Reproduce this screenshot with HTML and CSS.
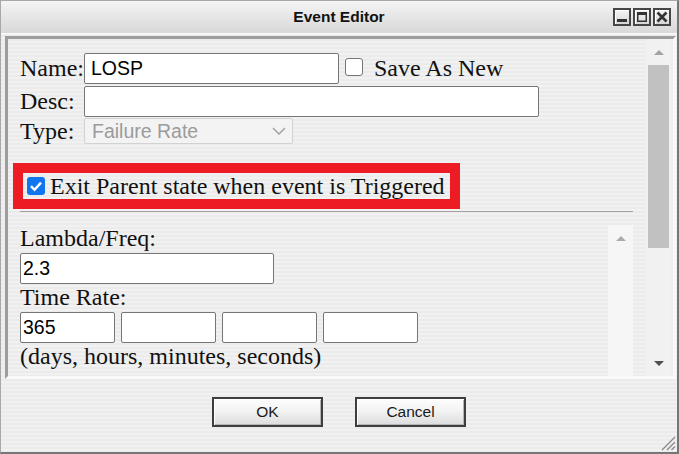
FILE: index.html
```html
<!DOCTYPE html>
<html>
<head>
<meta charset="utf-8">
<link rel="stylesheet" href="styles.css">
</head>
<body>
<div class="window">
  <div class="titlebar">
    <div></div>
    <div class="title">Event Editor</div>
    <div class="tbtns">
      <span class="tbtn"><svg width="14" height="14" viewBox="0 0 14 14"><rect x="2" y="9" width="10" height="3" fill="#333"/></svg></span>
      <span class="tbtn"><svg width="14" height="14" viewBox="0 0 14 14"><rect x="2.75" y="2.75" width="8.5" height="8.5" fill="none" stroke="#333" stroke-width="1.5"/><rect x="2" y="2" width="10" height="3" fill="#333"/></svg></span>
      <span class="tbtn"><svg width="14" height="14" viewBox="0 0 14 14"><path d="M2.5 2.5 L11.5 11.5 M11.5 2.5 L2.5 11.5" stroke="#333" stroke-width="2.6"/></svg></span>
    </div>
  </div>

  <div class="panel">
    <div class="content">
      <div class="row row-name">
        <span class="lbl">Name:</span>
        <input class="txt name" value="LOSP">
        <span class="cb cb-save"></span>
        <span class="cblbl">Save As New</span>
      </div>
      <div class="row row-desc">
        <span class="lbl">Desc:</span>
        <input class="txt desc" value="">
      </div>
      <div class="row row-type">
        <span class="lbl">Type:</span>
        <div class="select"><span>Failure Rate</span><svg width="14" height="8" viewBox="0 0 14 8"><path d="M1 1 L7 7 L13 1" fill="none" stroke="#a2a2a2" stroke-width="1.5"/></svg></div>
      </div>
      <div class="highlight">
        <span class="cb checked"><svg width="18" height="18" viewBox="0 0 18 18"><path d="M4 9.2 L7.5 12.8 L14 5.6" fill="none" stroke="#fff" stroke-width="2.4"/></svg></span>
        <span class="hl-text">Exit Parent state when event is Triggered</span>
      </div>
      <div class="rule"></div>
      <div class="inner">
        <div class="inner-body">
          <div class="field-lbl">Lambda/Freq:</div>
          <input class="txt lambda" value="2.3">
          <div class="field-lbl">Time Rate:</div>
          <div class="times">
            <input class="txt t" value="365">
            <input class="txt t" value="">
            <input class="txt t" value="">
            <input class="txt t" value="">
          </div>
          <div class="field-lbl">(days, hours, minutes, seconds)</div>
        </div>
        <div class="iscroll">
          <div class="arrbox"><span class="tri-up light"></span></div>
        </div>
      </div>
    </div>
    <div class="oscroll">
      <div class="arrbox"><span class="tri-up"></span></div>
      <div class="thumb"></div>
      <div class="spacer"></div>
      <div class="arrbox"><span class="tri-down"></span></div>
    </div>
  </div>

  <div class="footer">
    <button class="btn">OK</button>
    <button class="btn">Cancel</button>
    <svg class="grip" width="18" height="18" viewBox="0 0 18 18"><path d="M17 4 L4 17 M17 9 L9 17 M17 13.5 L13.5 17" stroke="#8a8a8a" stroke-width="1.3"/></svg>
  </div>
</div>
</body>
</html>
```

FILE: styles.css
```css
* { box-sizing: border-box; }

body {
  margin: 0;
  width: 679px;
  height: 454px;
  overflow: hidden;
  background: #f0f0f0;
}

.window {
  width: 679px;
  height: 454px;
  display: flex;
  flex-direction: column;
  border-style: solid;
  border-width: 1px 2px 2px 1px;
  border-color: #a8a8a8 #767676 #767676 #a8a8a8;
  background: repeating-linear-gradient(180deg, #f1f1f1 0, #f1f1f1 2px, #ebebeb 2px, #ebebeb 4px);
  font-family: "Liberation Serif", "Times New Roman", serif;
  color: #111;
}

.titlebar {
  height: 33px;
  flex: none;
  display: grid;
  grid-template-columns: 1fr auto 1fr;
  align-items: center;
  background: linear-gradient(180deg, #f4f4f4 0%, #e6e6e6 50%, #d8d8d8 100%);
  border-bottom: 1px solid #fafafa;
}

.title {
  font: bold 15.5px "Liberation Sans", Arial, sans-serif;
  color: #111;
}

.tbtns {
  justify-self: end;
  display: flex;
  gap: 2px;
  padding-right: 6px;
}

.tbtn {
  width: 18px;
  height: 18px;
  border: 2px solid #464646;
  background: linear-gradient(180deg, #f5f5f5, #d6d6d6);
  box-shadow: inset 1px 1px 0 #ffffff;
  display: flex;
}

.panel {
  flex: none;
  margin: 2px 1px 0 4px;
  height: 343px;
  border-style: solid;
  border-width: 3px;
  border-color: #9d9d9d #f9f9f9 #f9f9f9 #9d9d9d;
  display: flex;
  overflow: hidden;
}

.content {
  flex: 1;
  min-width: 0;
  padding: 14px 13px 0 12px;
}

.row {
  display: flex;
  align-items: center;
}

.row-name { height: 31px; margin-bottom: 2px; }
.row-desc { height: 31px; margin-bottom: 1px; }
.row-type { height: 26px; }

.lbl {
  width: 64px;
  flex: none;
  font-size: 24px;
  line-height: 1.1;
  white-space: nowrap;
}

.txt {
  display: block;
  height: 31px;
  margin: 0;
  border: 1px solid #767676;
  border-radius: 2px;
  background: #fff;
  font: 19.5px "Liberation Sans", Arial, sans-serif;
  color: #000;
  padding: 0 2px;
  outline: none;
}

.name { width: 255px; padding-left: 6px; }
.desc { width: 455px; }

.cb {
  flex: none;
  width: 18px;
  height: 18px;
  border: 1px solid #767676;
  border-radius: 3px;
  background: #fff;
  display: flex;
}

.cb-save {
  align-self: flex-start;
  margin: 5px 0 0 6px;
}

.cblbl {
  margin-left: 11px;
  font-size: 24px;
  line-height: 1.1;
  white-space: nowrap;
}

.select {
  width: 209px;
  height: 26px;
  border: 1px solid #d2d2d2;
  border-radius: 2px;
  background: #f3f3f3;
  color: #9b9b9b;
  font: 19.5px "Liberation Sans", Arial, sans-serif;
  display: flex;
  align-items: center;
  justify-content: space-between;
  padding: 0 6px 0 7px;
}

.highlight {
  width: 447px;
  height: 46px;
  margin: 19px 0 0 -7px;
  border: 10px solid #ed1c24;
  display: flex;
  align-items: center;
}

.cb.checked {
  margin-left: 4px;
  border: none;
  background: #1076f0;
}

.hl-text {
  margin-left: 5px;
  font-size: 24px;
  line-height: 1.1;
  white-space: nowrap;
}

.rule {
  margin-top: 2px;
  height: 1px;
  background: #a2a2a2;
}

.inner {
  margin-top: 13px;
  height: 220px;
  display: flex;
}

.inner-body {
  flex: 1;
  min-width: 0;
}

.field-lbl {
  font-size: 24px;
  line-height: 26.2px;
  white-space: nowrap;
}

.lambda {
  width: 254px;
  margin-top: 2px;
}

.times {
  display: flex;
  gap: 6px;
  margin-top: 2px;
}

.t { width: 95px; }

.iscroll {
  width: 25px;
  flex: none;
  background: #f6f6f6;
}

.oscroll {
  width: 25px;
  flex: none;
  margin-right: 2px;
  display: flex;
  flex-direction: column;
  background: #f1f1f1;
}

.arrbox {
  height: 26px;
  flex: none;
  display: flex;
  align-items: center;
  justify-content: center;
}

.thumb {
  height: 183px;
  margin: 0 2px;
  background: #c1c1c1;
}

.spacer { flex: 1; }

.tri-up {
  width: 0;
  height: 0;
  border-left: 5.5px solid transparent;
  border-right: 5.5px solid transparent;
  border-bottom: 5.5px solid #a3a3a3;
}

.tri-up.light { border-bottom-color: #ababab; }

.tri-down {
  width: 0;
  height: 0;
  border-left: 5.5px solid transparent;
  border-right: 5.5px solid transparent;
  border-top: 5.5px solid #505050;
}

.footer {
  flex: 1;
  position: relative;
  display: flex;
  justify-content: center;
  align-items: flex-start;
  gap: 32px;
  padding-top: 18px;
}

.btn {
  width: 111px;
  height: 30px;
  padding: 0;
  border: 2px solid #3e3e3e;
  background: linear-gradient(180deg, #fdfdfd 0%, #f3f3f3 45%, #dcdcdc 100%);
  box-shadow: inset 1px 1px 0 #ffffff, inset -1px -1px 0 #b4b4b4;
  font: 15.5px "Liberation Sans", Arial, sans-serif;
  color: #1a1a1a;
}

.grip {
  position: absolute;
  right: 1px;
  bottom: 1px;
}
```
